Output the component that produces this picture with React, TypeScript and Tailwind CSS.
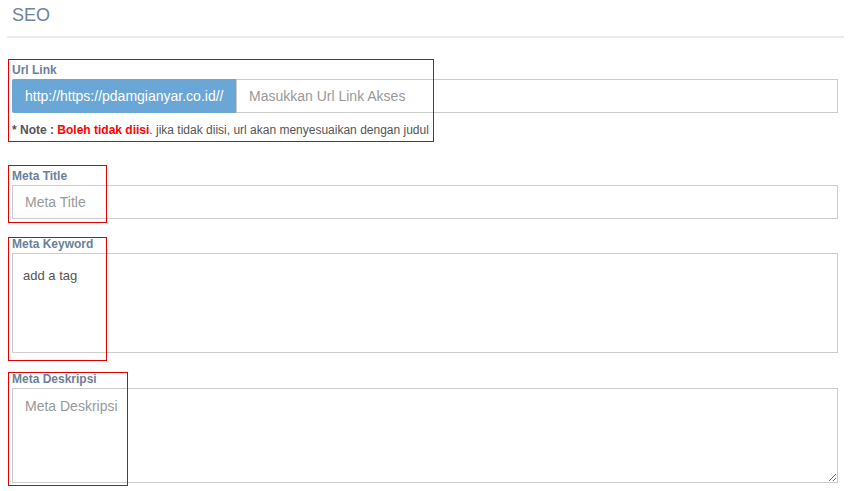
import React from "react"

/**
 * SEO form section with annotation boxes
 */
export default function App() {
  const labelCls = "block pt-[1px] text-[12px] leading-[15px] font-bold text-[#6b7f9b] mb-[1px]"

  return (
    <div
      className="relative w-[851px] h-[491px] bg-white overflow-hidden"
      style={{ fontFamily: '"Liberation Sans", Arial, sans-serif' }}
    >
      {/* Header */}
      <div className="mx-[7px] h-[36px] box-content border-b-2 border-[#e8ebef]">
        <h2 className="pl-[5px] pt-[3px] text-[18px] leading-[24px] text-[#6f84a0] font-normal">SEO</h2>
      </div>

      {/* Form */}
      <div className="pl-[12px] pr-[13px]">
        {/* Url Link */}
        <div className="mt-[24px]">
          <label className={labelCls}>Url Link</label>
          <div className="flex h-[34px]">
            <span className="flex items-center w-[224px] px-[13px] bg-[#6aa6d6] text-white text-[14px] rounded-l-[2px] whitespace-nowrap">
              http://https://pdamgianyar.co.id//
            </span>
            <input
              className="flex-1 min-w-0 border border-[#cccccc] px-[12px] text-[14px] text-[#555] placeholder:text-[#999] outline-none"
              placeholder="Masukkan Url Link Akses"
            />
          </div>
          <p className="mt-[10px] text-[12px] leading-[15px] text-[#555]">
            <b>* Note : </b>
            <b className="text-[#f00]">Boleh tidak diisi</b>. jika tidak diisi, url akan menyesuaikan dengan judul
          </p>
        </div>

        {/* Meta Title */}
        <div className="mt-[30px]">
          <label className={labelCls}>Meta Title</label>
          <input
            className="block w-full h-[34px] border border-[#cccccc] px-[12px] text-[14px] text-[#555] placeholder:text-[#999] outline-none"
            placeholder="Meta Title"
          />
        </div>

        {/* Meta Keyword */}
        <div className="mt-[17px]">
          <label className={labelCls}>Meta Keyword</label>
          <div className="h-[100px] border border-[#cccccc] pt-[9px] pl-[10px]">
            <span className="text-[13px] leading-[18px] text-[#555]">add a tag</span>
          </div>
        </div>

        {/* Meta Deskripsi */}
        <div className="mt-[18px]">
          <label className={labelCls}>Meta Deskripsi</label>
          <textarea
            className="block w-full h-[95px] border border-[#cccccc] px-[12px] pt-[7px] pb-[5px] text-[14px] leading-[20px] text-[#555] placeholder:text-[#999] outline-none"
            placeholder="Meta Deskripsi"
          />
        </div>
      </div>

      {/* Annotation boxes */}
      <div className="absolute left-[8px] top-[59px] w-[426px] h-[83px] border border-[#e00000] pointer-events-none" />
      <div className="absolute left-[8px] top-[165px] w-[99px] h-[58px] border border-[#e00000] pointer-events-none" />
      <div className="absolute left-[8px] top-[237px] w-[99px] h-[124px] border border-[#e00000] pointer-events-none" />
      <div className="absolute left-[8px] top-[372px] w-[120px] h-[114px] border border-[#e00000] pointer-events-none" />
    </div>
  )
}
